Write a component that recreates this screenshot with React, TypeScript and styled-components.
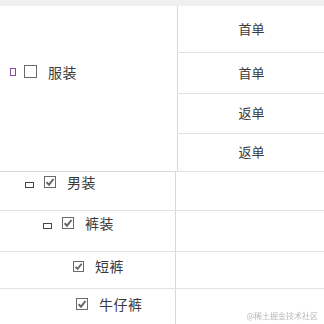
import React from 'react';
import styled, { createGlobalStyle } from 'styled-components';

const GlobalStyle = createGlobalStyle`
  html, body {
    margin: 0;
    padding: 0;
    background: #fff;
    font-family: "Noto Sans CJK SC", "Noto Sans", sans-serif;
    color: #3a3a3a;
  }
`;

const Page = styled.div`
  position: relative;
  width: 324px;
  height: 324px;
  overflow: hidden;
  background: #fff;
`;

const TopBar = styled.div`
  height: 6px;
  background: #f0f0f0;
`;

const GroupBlock = styled.div`
  display: grid;
  grid-template-columns: 177px 1fr;
  align-items: start;
`;

const GroupCell = styled.div`
  height: 166px;
  width: 178px;
  box-sizing: border-box;
  border-right: 1px solid #d9d9d9;
  border-bottom: 1px solid #d9d9d9;
  display: flex;
  align-items: flex-start;
  padding: 59px 0 0 10px;
`;

const TypeList = styled.div`
  display: flex;
  flex-direction: column;
`;

const TypeCell = styled.div<{ h: number }>`
  height: ${(p) => p.h}px;
  box-sizing: border-box;
  border-bottom: 1px solid #e2e2e2;
  display: flex;
  align-items: center;
  justify-content: center;
  font-size: 13px;
  padding: 0 0 2px 2px;
`;

const TreeRow = styled.div<{ h: number }>`
  display: grid;
  grid-template-columns: 175px 1fr;
  height: ${(p) => p.h}px;
  box-sizing: border-box;
  border-bottom: 1px solid #e2e2e2;
`;

const NameCell = styled.div<{ indent: number; top: number }>`
  display: flex;
  align-items: center;
  align-self: start;
  padding: ${(p) => p.top}px 0 0 ${(p) => p.indent}px;
`;

const EmptyCell = styled.div`
  border-left: 1px solid #d9d9d9;
`;

const Toggle = styled.span<{ vertical?: boolean }>`
  display: inline-block;
  box-sizing: border-box;
  width: ${(p) => (p.vertical ? 6 : 9)}px;
  height: ${(p) => (p.vertical ? 8 : 6)}px;
  border: 1px solid ${(p) => (p.vertical ? '#8a4c9c' : '#444')};
  margin-right: ${(p) => (p.vertical ? 8 : 10)}px;
  margin-top: ${(p) => (p.vertical ? 3 : 5)}px;
`;

const Box = styled.span<{ size: number }>`
  display: inline-flex;
  align-items: center;
  justify-content: center;
  box-sizing: border-box;
  width: ${(p) => p.size}px;
  height: ${(p) => p.size}px;
  border: 1px solid #6a6a6a;
  background: #fff;
  margin-right: 11px;
`;

const Label = styled.span`
  font-size: 14px;
  line-height: 1;
  letter-spacing: 0.5px;
`;

const Watermark = styled.div`
  position: absolute;
  right: 6px;
  bottom: 3px;
  font-size: 8px;
  color: #b8b8b8;
  filter: blur(0.3px);
`;

const Check = ({ size }: { size: number }) => (
  <Box size={size}>
    <svg width={size - 2} height={size - 2} viewBox="0 0 10 10">
      <path d="M1.6 5.3 L4 7.7 L8.5 2" fill="none" stroke="#666" strokeWidth="2" />
    </svg>
  </Box>
);

const types = [
  { label: '首单', h: 47 },
  { label: '首单', h: 41 },
  { label: '返单', h: 40 },
  { label: '返单', h: 38 },
];

const tree = [
  { label: '男装', indent: 25, top: 3, h: 39, toggle: true, box: 12 },
  { label: '裤装', indent: 43, top: 5, h: 41, toggle: true, box: 12 },
  { label: '短裤', indent: 73, top: 7, h: 37, toggle: false, box: 11 },
  { label: '牛仔裤', indent: 76, top: 8, h: 40, toggle: false, box: 12 },
];

const App = () => {
  return (
    <Page>
      <GlobalStyle />
      <TopBar />
      <GroupBlock>
        <GroupCell>
          <Toggle vertical />
          <Box size={13} />
          <Label>服装</Label>
        </GroupCell>
        <TypeList>
          {types.map((t, i) => (
            <TypeCell key={i} h={t.h}>
              {t.label}
            </TypeCell>
          ))}
        </TypeList>
      </GroupBlock>
      {tree.map((r) => (
        <TreeRow key={r.label} h={r.h}>
          <NameCell indent={r.indent} top={r.top}>
            {r.toggle && <Toggle />}
            <Check size={r.box} />
            <Label>{r.label}</Label>
          </NameCell>
          <EmptyCell />
        </TreeRow>
      ))}
      <Watermark>@稀土掘金技术社区</Watermark>
    </Page>
  );
};

export default App;
